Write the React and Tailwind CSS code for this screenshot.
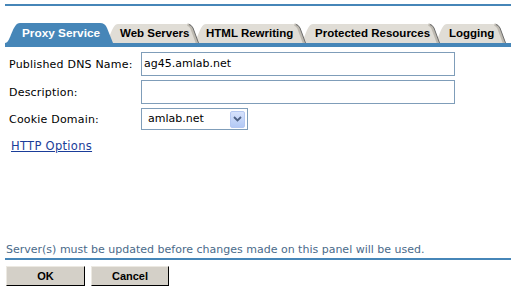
import React from "react";

const BLUE = "#4686b8";

function Tab({ label, w, active, z, textPad }) {
  const W = w;
  if (active) {
    const d = `M0,20 C6,20 7,0 15,0 L${W - 12},0 Q${W - 7},0 ${W - 5},5 L${W + 1},20 Z`;
    return (
      <div className={`relative h-[20px] flex items-center shrink-0 ${z}`} style={{ width: W }}>
        <svg className="absolute left-0 top-0" width={W + 2} height={20}>
          <path d={d} fill={BLUE} />
        </svg>
        <span
          className="relative text-white font-bold font-['Liberation_Sans',Arial,sans-serif] text-[11.8px] leading-none pt-[1px] whitespace-nowrap"
          style={{ paddingLeft: textPad }}
        >
          {label}
        </span>
      </div>
    );
  }
  const off = 8;
  const S = W + off;
  const d = `M0,20 C${off - 2},20 ${off - 1},1 ${off + 6},1 L${S - 14},1 Q${S - 9},1 ${S - 7},5 L${S - 1},20 Z`;
  const edge = `M${S - 11},1.5 Q${S - 8.5},2 ${S - 7},5 L${S - 1.5},20`;
  return (
    <div className={`relative h-[20px] flex items-center shrink-0 ${z}`} style={{ width: W }}>
      <svg className="absolute top-0" style={{ left: -off }} width={S + 1} height={20}>
        <path d={d} fill="#e0ddd6" />
        <path d={edge} fill="none" stroke="#bdb9b0" strokeWidth="2.5" transform="translate(-1.5,0)" />
        <path d={edge} fill="none" stroke="#6b6b6b" strokeWidth="1" />
      </svg>
      <span
        className="relative text-black font-bold font-['Liberation_Sans',Arial,sans-serif] text-[11.5px] leading-none pt-[2px] whitespace-nowrap"
        style={{ paddingLeft: textPad }}
      >
        {label}
      </span>
    </div>
  );
}

export default function App() {
  return (
    <div className="w-[511px] h-[290px] bg-white overflow-hidden flex flex-col font-['DejaVu_Sans',Verdana,sans-serif] text-[11px] text-black">
      <div className="pt-[4px] pl-[5px]">
        <div className="h-[2px] bg-[#4686b8]" />
      </div>
      <div className="pl-[5px] mt-[17px] flex h-[20px]">
        <Tab label="Proxy Service" w={107} active z="z-50" textPad={17} />
        <Tab label="Web Servers" w={88} z="z-40" textPad={8} />
        <Tab label="HTML Rewriting" w={107} z="z-30" textPad={6} />
        <Tab label="Protected Resources" w={134} z="z-20" textPad={8} />
        <Tab label="Logging" w={66} z="z-10" textPad={8} />
      </div>
      <div className="pl-[5px]">
        <div className="h-[4px] bg-[#4686b8]" />
      </div>

      <div className="flex flex-col gap-[4px] mt-[5px]">
        <div className="flex items-center">
          <div className="w-[141px] pl-[9px] pt-[3px] tracking-[0.2px]">Published DNS Name:</div>
          <div className="w-[314px] h-[24px] border border-[#7f9db9] flex items-center pl-[2px]">ag45.amlab.net</div>
        </div>
        <div className="flex items-center">
          <div className="w-[141px] pl-[9px] pt-[3px] tracking-[0.2px]">Description:</div>
          <div className="w-[314px] h-[24px] border border-[#7f9db9]" />
        </div>
        <div className="flex items-center">
          <div className="w-[141px] pl-[9px] pt-[3px] tracking-[0.2px]">Cookie Domain:</div>
          <div className="w-[107px] h-[22px] border border-[#7f9db9] flex items-center justify-between pl-[6px] pr-[2px]">
            <span className="pt-[1px]">amlab.net</span>
            <div className="w-[15px] h-[17px] rounded-[2px] border border-[#b5c8f2] bg-gradient-to-b from-[#d6e2fc] to-[#b3c9f5] flex items-center justify-center">
              <svg width="9" height="6" viewBox="0 0 9 6">
                <path d="M1,1 L4.5,4.5 L8,1" fill="none" stroke="#4d6185" strokeWidth="1.8" />
              </svg>
            </div>
          </div>
        </div>
      </div>

      <div className="mt-[8px] pl-[11px]">
        <span className="text-[#1a3d99] underline text-[11.5px] tracking-[0.3px]">HTTP Options</span>
      </div>

      <div className="mt-auto">
        <div className="pl-[6px] text-[#4a6a8a] leading-[14px]">
          Server(s) must be updated before changes made on this panel will be used.
        </div>
        <div className="pl-[5px] mt-[1px]">
          <div className="h-[2px] bg-[#4686b8]" />
        </div>
        <div className="flex gap-[6px] pl-[6px] mt-[6px] mb-[4px] font-['Liberation_Sans',Arial,sans-serif] text-[11px]">
          <div className="w-[79px] h-[20px] bg-[#d4d0c8] border-r border-b border-black border-l border-t border-l-[#ece9e2] border-t-[#ece9e2] flex items-center justify-center font-bold">
            OK
          </div>
          <div className="w-[78px] h-[20px] bg-[#d4d0c8] border-r border-b border-black border-l border-t border-l-[#ece9e2] border-t-[#ece9e2] flex items-center justify-center font-bold">
            Cancel
          </div>
        </div>
      </div>
    </div>
  );
}
